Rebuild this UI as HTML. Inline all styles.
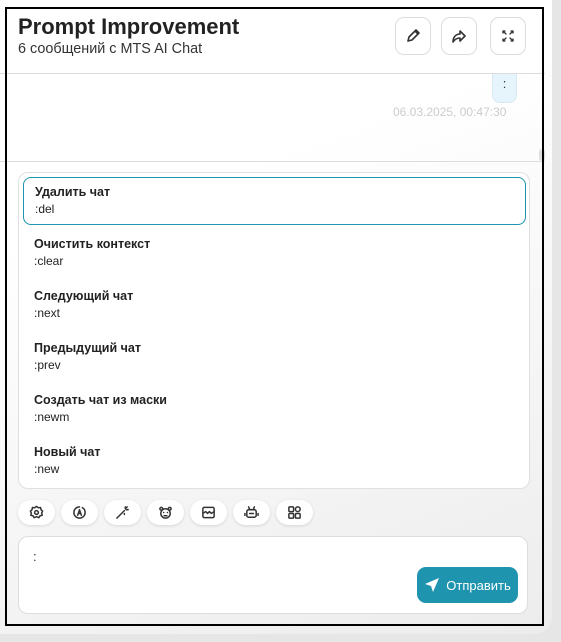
<!DOCTYPE html>
<html><head><meta charset="utf-8"><style>
*{box-sizing:border-box;margin:0;padding:0}
body{width:561px;height:642px;background:#e6e6e6;font-family:"Liberation Sans",sans-serif;position:relative;overflow:hidden}
.card{position:absolute;left:0;top:0;width:552px;height:634px;background:linear-gradient(160deg,#fff 30%,#ececec 100%);border-radius:0 0 18px 0}
.frame{position:absolute;left:5px;top:7px;width:539px;height:619px;border:2px solid #000}
h1{position:absolute;left:18px;top:14px;font-size:22px;font-weight:bold;color:#222;font-family:"Liberation Sans",sans-serif}
.sub{position:absolute;left:18px;top:41px;font-size:14.4px;color:#333}
.hb{position:absolute;top:17px;width:36px;height:38px;border:1px solid #ddd;border-radius:9px;background:#fff;display:flex;align-items:center;justify-content:center}
.line{position:absolute;left:0;width:545px;height:1px;background:#ddd}
.bubble{position:absolute;left:492px;top:74px;width:25px;height:29px;background:#e6f4fc;border:1px solid #d6eaf5;border-top:none;border-radius:0 0 8px 8px;font-size:13px;text-align:center;line-height:20px;color:#333}
.date{position:absolute;left:393px;top:105px;font-size:12px;color:#ccc}
.list{position:absolute;left:18px;top:172px;width:512px;height:317px;background:#fff;border:1px solid #e0e0e0;border-radius:10px}
.it{position:absolute;left:4px;width:503px;height:48px;padding:7px 11px;font-size:12px;color:#222}
.it b{display:block;font-size:12.5px;margin-bottom:3px}
.sel{border:1px solid #1e94ae;border-radius:8px}
.tb{position:absolute;top:500px;width:37px;height:25px;border-radius:13px;background:#fff;box-shadow:0 1px 3px rgba(0,0,0,.12);display:flex;align-items:center;justify-content:center}
.inp{position:absolute;left:18px;top:536px;width:510px;height:78px;background:#fff;border:1px solid #ddd;border-radius:10px}
.send{position:absolute;left:417px;top:567px;width:101px;height:36px;background:#1e94ae;border-radius:9px;color:#fff;font-size:13px;display:flex;align-items:center;justify-content:center;gap:6px}
svg{fill:none;stroke:#333;stroke-width:1.6;stroke-linecap:round;stroke-linejoin:round}
</style></head><body>
<div class="card"></div>
<h1>Prompt Improvement</h1>
<div class="sub">6 сообщений с MTS AI Chat</div>
<div class="hb" style="left:395px"><svg width="16" height="16" viewBox="0 0 16 16"><path d="M3 13l1-4 7-7 3 3-7 7z M10 3l3 3"/></svg></div>
<div class="hb" style="left:441px"><svg width="16" height="16" viewBox="0 0 16 16"><path d="M9 3l5 5-5 5V10C6 10 4 11 2 14c0-5 3-8 7-8z"/></svg></div>
<div class="hb" style="left:490px"><svg width="16" height="16" viewBox="0 0 16 16" style="stroke-width:1.3"><path d="M3 3l3 3M3 3v2M3 3h2M13 3l-3 3M13 3v2M13 3h-2M3 13l3-3M3 13v-2M3 13h2M13 13l-3-3M13 13v-2M13 13h-2"/></svg></div>
<div class="line" style="top:73px"></div>
<div class="bubble">:</div>
<div class="date">06.03.2025, 00:47:30</div>
<div class="line" style="top:161px"></div>
<div style="position:absolute;left:539px;top:149px;width:6px;height:12px;background:#ddd;border-radius:3px"></div>
<div class="list">
<div class="it sel" style="top:4px"><b>Удалить чат</b>:del</div>
<div class="it" style="top:57px"><b>Очистить контекст</b>:clear</div>
<div class="it" style="top:109px"><b>Следующий чат</b>:next</div>
<div class="it" style="top:161px"><b>Предыдущий чат</b>:prev</div>
<div class="it" style="top:213px"><b>Создать чат из маски</b>:newm</div>
<div class="it" style="top:265px"><b>Новый чат</b>:new</div>
</div>
<div class="tb" style="left:18px"><svg width="15" height="15" viewBox="0 0 16 16"><circle cx="8" cy="8" r="2"/><path d="M8 1.5l2 1.5 2.3-.3.5 2.3 1.7 1.6-1 2 .6 2.3-2.3.6-1.3 2L8 12.5l-2.5 1-1.3-2-2.3-.6.6-2.3-1-2 1.7-1.6.5-2.3L6 3z"/></svg></div>
<div class="tb" style="left:61px"><svg width="15" height="15" viewBox="0 0 16 16"><path d="M14 8A6 6 0 1 1 8 2M14 8a6 6 0 0 0-3-5.2M6 11l2-6 2 6M6.7 9h2.6"/></svg></div>
<div class="tb" style="left:104px"><svg width="15" height="15" viewBox="0 0 16 16"><path d="M2 14l8-8M11 2v2M14 5h-2M13 2l-1 1M10 9v1"/></svg></div>
<div class="tb" style="left:147px"><svg width="15" height="15" viewBox="0 0 16 16"><circle cx="8" cy="9" r="5"/><circle cx="3.5" cy="4" r="1.5"/><circle cx="12.5" cy="4" r="1.5"/><path d="M6 8h.1M10 8h.1M6.5 11.5h3"/></svg></div>
<div class="tb" style="left:190px"><svg width="15" height="15" viewBox="0 0 16 16"><rect x="2" y="2.5" width="12" height="11" rx="1.5"/><path d="M2 9l3-2 2 2 2-2 2 2 3-2"/></svg></div>
<div class="tb" style="left:233px"><svg width="15" height="15" viewBox="0 0 16 16"><rect x="3" y="5" width="10" height="8" rx="2"/><path d="M5 2l1 3M11 2l-1 3M6 9h4M1 9v2M15 9v2"/></svg></div>
<div class="tb" style="left:276px"><svg width="15" height="15" viewBox="0 0 16 16"><rect x="2" y="2" width="5" height="5" rx="1"/><rect x="9" y="2" width="5" height="5" rx="2.5"/><rect x="2" y="9" width="5" height="5" rx="1"/><rect x="9" y="9" width="5" height="5" rx="1"/></svg></div>
<div class="inp"><div style="position:absolute;left:14px;top:12px;font-size:13px;color:#333">:</div></div>
<div class="send"><svg width="16" height="16" viewBox="0 0 16 16" style="fill:#fff;stroke:none"><path d="M15 1L1 7l6 2 2 6z"/></svg>Отправить</div>
<div class="frame"></div>
</body></html>
